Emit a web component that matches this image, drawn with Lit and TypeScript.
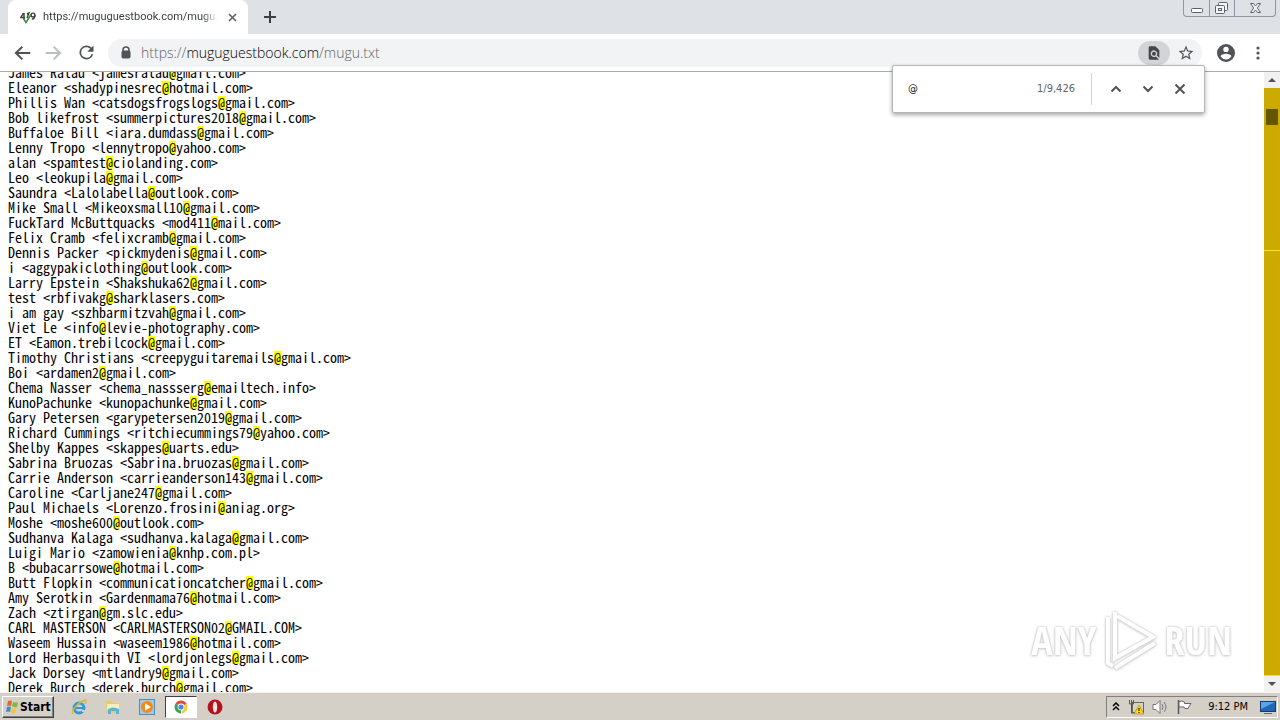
import { LitElement, html, css, svg } from "lit";
import { customElement, property } from "lit/decorators.js";

const ENTRIES = `James Ralau <jamesralau@gmail.com>
Eleanor <shadypinesrec@hotmail.com>
Phillis Wan <catsdogsfrogslogs@gmail.com>
Bob likefrost <summerpictures2018@gmail.com>
Buffaloe Bill <iara.dumdass@gmail.com>
Lenny Tropo <lennytropo@yahoo.com>
alan <spamtest@ciolanding.com>
Leo <leokupila@gmail.com>
Saundra <Lalolabella@outlook.com>
Mike Small <Mikeoxsmall10@gmail.com>
FuckTard McButtquacks <mod411@mail.com>
Felix Cramb <felixcramb@gmail.com>
Dennis Packer <pickmydenis@gmail.com>
i <aggypakiclothing@outlook.com>
Larry Epstein <Shakshuka62@gmail.com>
test <rbfivakg@sharklasers.com>
i am gay <szhbarmitzvah@gmail.com>
Viet Le <info@levie-photography.com>
ET <Eamon.trebilcock@gmail.com>
Timothy Christians <creepyguitaremails@gmail.com>
Boi <ardamen2@gmail.com>
Chema Nasser <chema_nassserg@emailtech.info>
KunoPachunke <kunopachunke@gmail.com>
Gary Petersen <garypetersen2019@gmail.com>
Richard Cummings <ritchiecummings79@yahoo.com>
Shelby Kappes <skappes@uarts.edu>
Sabrina Bruozas <Sabrina.bruozas@gmail.com>
Carrie Anderson <carrieanderson143@gmail.com>
Caroline <Carljane247@gmail.com>
Paul Michaels <Lorenzo.frosini@aniag.org>
Moshe <moshe600@outlook.com>
Sudhanva Kalaga <sudhanva.kalaga@gmail.com>
Luigi Mario <zamowienia@knhp.com.pl>
B <bubacarrsowe@hotmail.com>
Butt Flopkin <communicationcatcher@gmail.com>
Amy Serotkin <Gardenmama76@hotmail.com>
Zach <ztirgan@gm.slc.edu>
CARL MASTERSON <CARLMASTERSON02@GMAIL.COM>
Waseem Hussain <waseem1986@hotmail.com>
Lord Herbasquith VI <lordjonlegs@gmail.com>
Jack Dorsey <mtlandry9@gmail.com>
Derek Burch <derek.burch@gmail.com>`.split("\n");

@customElement("text-document")
class TextDocument extends LitElement {
  @property() query = "@";
  static styles = css`
    :host { display: block; flex: 1; min-width: 0; overflow: hidden; background: #fff; }
    .text { margin: -7px 8px 0; font: 14px/15px "Noto Sans Mono CJK SC", "Noto Sans Mono CJK JP", "DejaVu Sans Mono", monospace; color: #000; }
    .line { height: 15px; white-space: pre; }
    mark { background: linear-gradient(#ff0, #ff0) center / 100% 13px no-repeat; color: #000; }
  `;
  render() {
    return html`<div class="text">
      ${ENTRIES.map((entry) => {
        const [before, after] = entry.split(this.query);
        return html`<div class="line">${before}<mark>${this.query}</mark>${after}</div>`;
      })}
    </div>`;
  }
}

@customElement("match-scrollbar")
class MatchScrollbar extends LitElement {
  static styles = css`
    :host { display: flex; flex-direction: column; flex: none; width: 16px; background: #f1f1f1; }
    button { height: 16px; flex: none; border: 0; padding: 0; background: #f1f1f1; display: grid; place-items: center; }
    .track { flex: 1; background: #ccaa00; display: flex; flex-direction: column; align-items: center; border-bottom: 1px solid #ffe11a; }
    .thumb { width: 12px; height: 16px; margin-top: 21px; background: #665500; }
    .tick { width: 100%; height: 1px; margin-top: 125px; background: #ffe11a; }
  `;
  render() {
    return html`
      <button aria-label="Scroll up"><svg width="8" height="4"><path d="M0 4 4 0l4 4z" fill="#505050" /></svg></button>
      <div class="track"><div class="thumb"></div><div class="tick"></div></div>
      <button aria-label="Scroll down"><svg width="8" height="4"><path d="M0 0h8L4 4z" fill="#505050" /></svg></button>`;
  }
}

@customElement("find-bar")
class FindBar extends LitElement {
  static styles = css`
    :host {
      display: flex; align-items: center; box-sizing: border-box; width: 313px; height: 48px;
      padding: 0 8px 0 15px; background: #fff; border: 1px solid #b4b6b8; border-radius: 2px;
      box-shadow: 0 2px 4px rgba(0, 0, 0, 0.35); font: 11px/16px "DejaVu Sans Condensed", "DejaVu Sans", sans-serif; color: #5f6368;
    }
    input { flex: 1; min-width: 0; border: 0; outline: 0; padding: 0; background: none; font: inherit; color: #202124; }
    .rule { width: 1px; height: 32px; margin: 0 8px 0 16px; background: #d2d4d6; }
    button { width: 32px; height: 32px; padding: 0; border: 0; background: none; display: grid; place-items: center; }
    svg { fill: none; stroke: #505357; stroke-width: 2; }
  `;
  render() {
    return html`
      <input aria-label="Find in page" .value=${"@"} />
      <output>1/9,426</output>
      <div class="rule"></div>
      <button aria-label="Previous"><svg width="12" height="8"><path d="m1.500 6.500 4.500-4.500 4.500 4.500" /></svg></button>
      <button aria-label="Next"><svg width="12" height="8"><path d="m1.500 1.500 4.500 4.500 4.500-4.500" /></svg></button>
      <button aria-label="Close find bar"><svg width="12" height="12"><path d="m1.500 1.500 9 9M10.500 1.500l-9 9" /></svg></button>`;
  }
}

@customElement("browser-chrome")
class BrowserChrome extends LitElement {
  static styles = css`
    :host { display: block; flex: none; }
    button { border: 0; padding: 0; background: none; display: grid; place-items: center; }
    .tabs { display: flex; height: 34px; background: #dee1e6; }
    .tab {
      display: flex; align-items: center; box-sizing: border-box; width: 240px; margin-left: 8px; padding: 0 8px 0 12px;
      background: #fff; border-radius: 8px 8px 0 0; font: 11px/16px Roboto, sans-serif; color: #3c4043;
    }
    .title { flex: 1; min-width: 0; margin: 0 6px 0 7px; overflow: hidden; white-space: nowrap;
      -webkit-mask-image: linear-gradient(to left, transparent, #000 16px); mask-image: linear-gradient(to left, transparent, #000 16px); }
    .close { width: 16px; height: 16px; }
    .add { width: 28px; height: 34px; margin-left: 8px; }
    .window { display: flex; margin: 0 4px 0 auto; height: 17px; box-sizing: border-box; border: 1px solid #9095a0; border-top: 0; border-radius: 0 0 4px 4px; }
    .window button { width: 25px; }
    .window button + button { border-left: 1px solid #9095a0; }
    .window button:last-child { width: 41px; }
    .bar { display: flex; align-items: center; height: 37px; padding: 0 6px; background: #fff; border-bottom: 1px solid #a9acaf; }
    .nav { width: 32px; height: 32px; }
    .address { flex: 1; display: flex; align-items: center; height: 28px; margin: 0 8px 0 6px; padding-left: 12px; border-radius: 14px; background: #f1f3f4; }
    .url { flex: 1; margin-left: 9px; font: 300 14px/18px "Open Sans", sans-serif; color: #000; }
    .url span { color: #5f6368; }
    .find { width: 32px; height: 24px; border-radius: 12px; background: #d2d4d6; }
    .star { width: 32px; height: 28px; }
    .side { width: 32px; height: 32px; }
  `;
  render() {
    return html`
      <div class="tabs">
        <div class="tab">
          <svg width="16" height="16"><g fill="none" stroke="#3a3d3a" stroke-width="1.400"><path d="M3.500 4 .8 8.500H5M4 4v7M7 5l2-1-2 5" /><circle cx="13" cy="6" r="1.900" /><path d="M14.900 6c0 3-1 4-3 4" /></g><path d="m3.500 9.500 2.500 4 5-8" fill="none" stroke="#3c8f3c" stroke-width="1.500" /></svg>
          <span class="title">https://muguguestbook.com/mugu.txt</span>
          <button class="close" aria-label="Close tab"><svg width="9" height="9"><path d="m1 1 7 7M8 1 1 8" stroke="#5f6368" stroke-width="1.600" /></svg></button>
        </div>
        <button class="add" aria-label="New tab"><svg width="12" height="12"><path d="M6 0v12M0 6h12" stroke="#3c4043" stroke-width="2" /></svg></button>
        <div class="window">
          <button aria-label="Minimize"><svg width="24" height="16"><rect x="6.500" y="8.500" width="11" height="4" rx="1" fill="#fff" stroke="#5b606a" /></svg></button>
          <button aria-label="Restore"><svg width="24" height="16" fill="#f4f5f7" stroke="#5b606a"><rect x="8.500" y="2.500" width="9" height="8" rx="1" /><rect x="5.500" y="5.500" width="9" height="8" rx="1" /><rect x="8.500" y="8.500" width="3" height="2" /></svg></button>
          <button aria-label="Close"><svg width="40" height="16"><path d="M15.500 3.500h3l2 2.500 2-2.500h3L22.300 8l3.200 4.500h-3l-2-2.500-2 2.500h-3L18.700 8z" fill="#f4f5f7" stroke="#5b606a" /></svg></button>
        </div>
      </div>
      <div class="bar">
        <button class="nav" aria-label="Back"><svg width="18" height="18" viewBox="0 0 24 24"><path d="M22 10.700H6.200l6.200-6.200L10.500 2.600.9 12l9.600 9.400 1.900-1.900-6.200-6.200H22z" transform="translate(1)" fill="#505357" /></svg></button>
        <button class="nav" aria-label="Forward"><svg width="18" height="18" viewBox="0 0 24 24"><path d="M1 10.700h15.800l-6.200-6.200 1.900-1.900 9.600 9.400-9.600 9.400-1.900-1.900 6.200-6.200H1z" fill="#bdbfc2" /></svg></button>
        <button class="nav" aria-label="Reload"><svg width="21" height="21" viewBox="0 0 24 24"><path d="M17.650 6.350A8 8 0 1 0 19.730 14h-2.080A6 6 0 1 1 12 6c1.660 0 3.140.690 4.220 1.780L13 11h7V4z" fill="#505357" /></svg></button>
        <div class="address">
          <svg width="12" height="14"><path d="M3 6V4a3 3 0 0 1 6 0v2" fill="none" stroke="#505357" stroke-width="1.500" /><rect x="2" y="5" width="8" height="7" rx="1" fill="#505357" stroke="#505357" /></svg>
          <div class="url"><span>https://</span>muguguestbook.com<span>/mugu.txt</span></div>
          <button class="find" aria-label="Find in page"><svg width="16" height="16" viewBox="0 0 24 24"><path d="M20 19.590V8l-6-6H6a2 2 0 0 0-2 2v16c0 1.100.890 2 1.990 2H18c.450 0 .850-.150 1.190-.400l-4.430-4.430A5 5 0 1 1 16.170 15.750L20 19.590zM9 13a3 3 0 1 0 6 0 3 3 0 0 0-6 0z" fill="#44474a" /></svg></button>
          <button class="star" aria-label="Bookmark"><svg width="18" height="18" viewBox="0 0 24 24"><path d="m22 9.240-7.190-.620L12 2 9.190 8.630 2 9.240l5.460 4.730L5.820 21 12 17.270 18.180 21l-1.630-7.030zM12 15.400l-3.760 2.270 1-4.280-3.320-2.880 4.380-.380L12 6.100l1.710 4.040 4.380.380-3.320 2.880 1 4.280z" fill="#505357" /></svg></button>
        </div>
        <button class="side" aria-label="Profile"><svg width="18" height="18" viewBox="2 2 20 20"><path d="M12 2a10 10 0 1 0 0 20 10 10 0 0 0 0-20zm0 3a3 3 0 1 1 0 6 3 3 0 0 1 0-6zm0 14.200a7.200 7.200 0 0 1-6-3.220c.030-1.990 4-3.080 6-3.080s5.970 1.090 6 3.080a7.200 7.200 0 0 1-6 3.220z" fill="#505357" /></svg></button>
        <button class="side" aria-label="Menu"><svg width="4" height="14" fill="#505357"><circle cx="2" cy="2" r="1.600" /><circle cx="2" cy="7" r="1.600" /><circle cx="2" cy="12" r="1.600" /></svg></button>
      </div>`;
  }
}

const ICONS = {
  explorer: svg`<circle cx="8" cy="9" r="5" fill="none" stroke="#2c9be0" stroke-width="2.800" /><path d="M4 9h9" stroke="#2c9be0" stroke-width="2" /><path d="M11 11h4v2h-4z" fill="#d4d0c8" /><path d="M2 15C-1 13 6 4 14 1c2 0 1 2 0 4" fill="none" stroke="#e6b422" stroke-width="1.400" />`,
  folder: svg`<path d="M1 2h6l1 2h6v10H1z" fill="#e5cb74" /><path d="M2 5h12v6H2z" fill="#fbeeb8" /><path d="M3 15v-5q5-3 11 0v5h-3v-3H6v3z" fill="#58b6dd" />`,
  player: svg`<rect x=".5" y=".5" width="15" height="15" fill="#9fcbe8" stroke="#4c8fbd" /><circle cx="8" cy="8" r="6" fill="#f28a1a" /><path d="M6 4.500v7L12 8z" fill="#fff" />`,
  chrome: svg`<path d="M8 8 2.400 4.800A6.500 6.500 0 0 1 13.600 4.800z" fill="#de4b3b" /><path d="M8 8 2.400 4.800A6.500 6.500 0 0 0 8 14.500z" fill="#35a355" /><path d="M8 8l5.600-3.200A6.500 6.500 0 0 1 8 14.500l3-5.500z" fill="#f8cc35" /><circle cx="8" cy="8" r="3.400" fill="#fff" /><circle cx="8" cy="8" r="2.600" fill="#4a86e0" />`,
  opera: svg`<circle cx="8" cy="8" r="7.500" fill="#b5121b" /><ellipse cx="8" cy="8" rx="2.200" ry="5.500" fill="#f3e5e5" />`,
};

@customElement("task-bar")
class TaskBar extends LitElement {
  static styles = css`
    :host { display: flex; align-items: center; flex: none; box-sizing: border-box; height: 28px; padding: 0 2px; background: #d4d0c8; border-top: 1px solid #f4f2ee; }
    button { border: 0; padding: 0; background: none; display: grid; place-items: center; }
    .start { display: flex; align-items: center; width: 52px; height: 22px; box-sizing: border-box; padding: 0 1px;
      border: 1px solid; border-color: #fff #404040 #404040 #fff; box-shadow: inset -1px -1px #808080; font: bold 12px/16px "DejaVu Sans Condensed", "DejaVu Sans", sans-serif; color: #000; }
    .apps { display: flex; gap: 2px; margin-left: 9px; }
    .app { width: 32px; height: 22px; box-sizing: border-box; }
    .active { background: #fff; border: 1px solid; border-color: #404040 #fff #fff #404040; }
    .tray { display: flex; align-items: center; gap: 8px; height: 22px; box-sizing: border-box; margin-left: auto; padding: 0 1px 0 5px;
      border: 1px solid; border-color: #808080 #fff #fff #808080; font: 11px/16px "DejaVu Sans Condensed", "DejaVu Sans", sans-serif; color: #000; }
    time { margin: 0 4px 0 8px; white-space: nowrap; }
  `;
  render() {
    const app = (name: keyof typeof ICONS, label: string) =>
      html`<button class="app ${name === "chrome" ? "active" : ""}" aria-label=${label}><svg width="16" height="16">${ICONS[name]}</svg></button>`;
    return html`
      <button class="start"><svg width="16" height="16"><path d="M4 2q2-1 4 0L7 7q-2-1-4 0z" fill="#e8642c" /><path d="M9 3q3 1 5 0l-1 5q-3 1-5-1z" fill="#7fb83a" /><path d="M3 8q2-1 4 0l-1 5q-2-1-4 0z" fill="#3d8bd4" /><path d="M8 9q2 1 4 0l-1 5q-2 1-4-1z" fill="#f5c52c" /></svg>Start</button>
      <div class="apps">${app("explorer", "Internet Explorer")}${app("folder", "Explorer")}${app("player", "Media Player")}${app("chrome", "Chrome")}${app("opera", "Opera")}</div>
      <div class="tray">
        <button aria-label="Show hidden icons"><svg width="8" height="9" fill="none" stroke="#000" stroke-width="1.500"><path d="m1 4 3-3 3 3M1 8l3-3 3 3" /></svg></button>
        <svg width="16" height="16"><rect x="4.500" y="3.500" width="11" height="10" fill="#d5d2c0" stroke="#666" /><path d="M1.500 1v4h4V1M3.500 1v13h3" fill="none" stroke="#555" /><path d="m11 6 5 9H6z" fill="#ffd21f" stroke="#a98500" stroke-width=".6" /><path d="M11 9v3M11 13v1" stroke="#000" /></svg>
        <svg width="16" height="16" fill="none" stroke="#777"><path d="M1 5.500h3l4-4v13l-4-4H1z" fill="#fff" /><path d="M10 5q2 3 0 6M12 3q4 5 0 10" /></svg>
        <svg width="16" height="16"><path d="M2.500 1v14" stroke="#555" stroke-width="1.500" /><path d="M3 2.500q3-1 5.500.500v1.500h6.500l-2 3-1 2H9l-1-1.500H3z" fill="#fff" stroke="#666" /></svg>
        <time>9:12 PM</time>
        <svg width="16" height="16"><rect x=".5" y="2.500" width="15" height="10" fill="#2067b8" stroke="#123d73" /><path d="M1 3h14L1 10z" fill="#5ba4e6" /><path d="M4 14.500h8" stroke="#5c6b7a" /></svg>
      </div>`;
  }
}

@customElement("app-root")
class AppRoot extends LitElement {
  static styles = css`
    :host { display: flex; flex-direction: column; height: 100vh; overflow: hidden; position: relative; background: #fff; }
    .page { flex: 1; min-height: 0; display: flex; }
    find-bar { position: absolute; top: 65px; right: 75px; }
    .watermark { position: absolute; right: 48px; bottom: 48px; display: flex; align-items: center; gap: 4px; color: #fff; font: 40px/60px "Liberation Sans Narrow", "Open Sans Condensed", "Liberation Sans", sans-serif; filter: drop-shadow(0 0 1px #bbb) drop-shadow(0 1px 1px #ddd); }
  `;
  render() {
    return html`
      <browser-chrome></browser-chrome>
      <div class="page"><text-document></text-document><match-scrollbar></match-scrollbar></div>
      <task-bar></task-bar>
      <find-bar></find-bar>
      <div class="watermark"><span>ANY</span><svg width="60" height="64" fill="none" stroke="#fff" stroke-width="4"><path d="M15 4v46l38-21-36-21M8 9v46l5 3M15 60l40-25" /></svg><span>RUN</span></div>`;
  }
}
